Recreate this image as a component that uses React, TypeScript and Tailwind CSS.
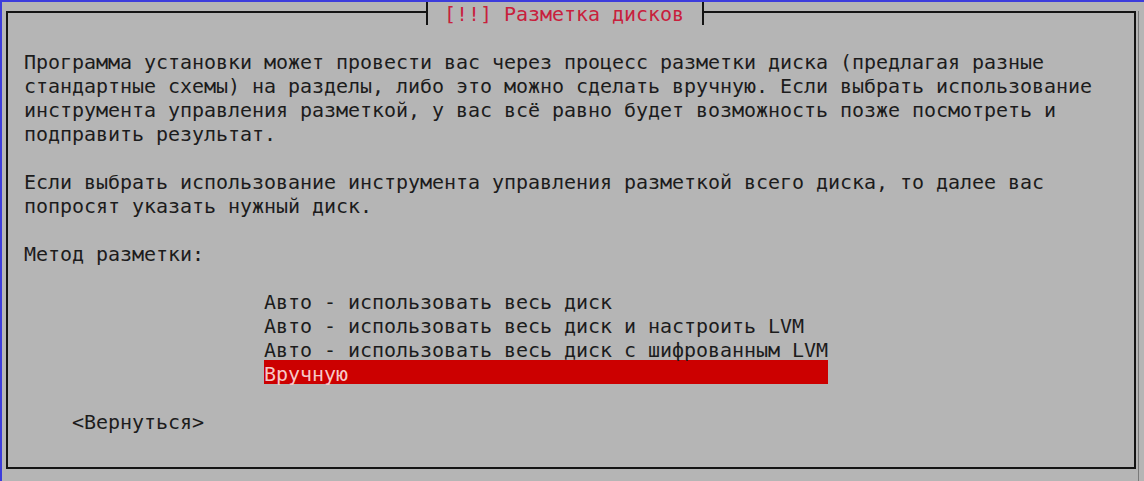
const para1 = [
  "Программа установки может провести вас через процесс разметки диска (предлагая разные",
  "стандартные схемы) на разделы, либо это можно сделать вручную. Если выбрать использование",
  "инструмента управления разметкой, у вас всё равно будет возможность позже посмотреть и",
  "подправить результат.",
];

const para2 = [
  "Если выбрать использование инструмента управления разметкой всего диска, то далее вас",
  "попросят указать нужный диск.",
];

const methods = [
  "Авто - использовать весь диск",
  "Авто - использовать весь диск и настроить LVM",
  "Авто - использовать весь диск с шифрованным LVM",
  "Вручную",
];

const Row = ({ children, className = "" }: { children?: React.ReactNode; className?: string }) => (
  <div className={`h-6 leading-[29px] whitespace-pre ${className}`}>{children}</div>
);

export default function App() {
  const selected = 3;
  return (
    <div className="w-[1144px] h-[481px] overflow-hidden border-l-2 border-t-2 border-[#3c3cdc] bg-[#b5b5b5] pl-1 pt-[9px] font-['DejaVu_Sans_Mono',monospace] text-[20px] tracking-[-0.04px] text-[#1c1c1c]">
      {/* faint shadow line to the right of the dialog */}
      <div className="w-[1133px] h-[470px] border-r border-[#7a7a7a]">
        <div className="relative w-[1130px] h-[458px] border-2 border-[#141414]">
          {/* title sits on the top border */}
          <div className="absolute left-[418px] top-[-13px] w-[278px] h-[25px] border-x-2 border-[#141414] bg-[#b5b5b5] pl-4">
            <div className="h-6 leading-[29px] whitespace-pre text-[#c8203c]">[!!] Разметка дисков</div>
          </div>

          <div className="pl-4 pt-[35px]">
            {para1.map((line) => (
              <Row key={line}>{line}</Row>
            ))}
            <Row />
            {para2.map((line) => (
              <Row key={line}>{line}</Row>
            ))}
            <Row />
            <Row>Метод разметки:</Row>
            <Row />
            <div className="ml-[240px] w-[564px]">
              {methods.map((m, i) => (
                <Row key={m} className={i === selected ? "bg-[#cc0000] text-[#f6c8c8]" : ""}>
                  {m}
                </Row>
              ))}
            </div>
            <Row />
            <Row className="ml-12">{"<Вернуться>"}</Row>
          </div>
        </div>
      </div>
    </div>
  );
}
